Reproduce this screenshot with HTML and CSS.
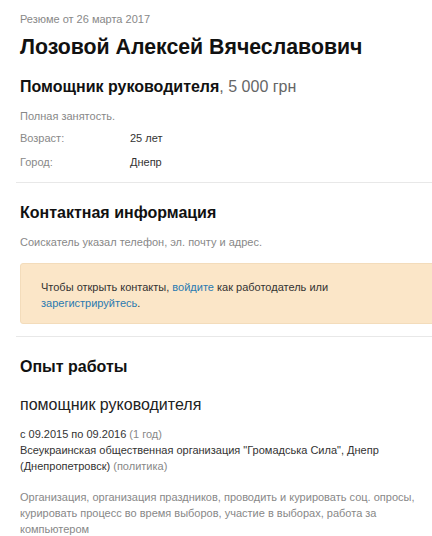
FILE: index.html
```html
<!DOCTYPE html>
<html lang="ru">
<head>
<meta charset="utf-8">
<link rel="stylesheet" href="styles.css">
</head>
<body>
<div class="page">
  <div class="date">Резюме от 26 марта 2017</div>
  <h1 class="name">Лозовой Алексей Вячеславович</h1>
  <div class="position"><b>Помощник руководителя</b><span class="salary">, 5 000 грн</span></div>
  <div class="muted employment">Полная занятость.</div>
  <div class="info">
    <span class="muted">Возраст:</span><span>25 лет</span>
    <span class="muted">Город:</span><span>Днепр</span>
  </div>
  <hr class="sep first">
  <h2 class="section">Контактная информация</h2>
  <div class="muted contact-note">Соискатель указал телефон, эл. почту и адрес.</div>
  <div class="notice">Чтобы открыть контакты, <a href="#">войдите</a> как работодатель или<br><a href="#">зарегистрируйтесь</a>.</div>
  <hr class="sep second">
  <h2 class="section">Опыт работы</h2>
  <div class="job-title">помощник руководителя</div>
  <div class="job-meta">с 09.2015 по 09.2016 <span class="muted">(1 год)</span><br>Всеукраинская общественная организация "Громадська Сила", Днепр<br>(Днепропетровск) <span class="muted">(политика)</span></div>
  <div class="muted job-desc">Организация, организация праздников, проводить и курировать соц. опросы,<br>курировать процесс во время выборов, участие в выборах, работа за<br>компьютером</div>
</div>
</body>
</html>
```

FILE: styles.css
```css
html, body {
  margin: 0;
  padding: 0;
  background: #fff;
  overflow: hidden;
}
body {
  font-family: "Liberation Sans", Arial, sans-serif;
  color: #333;
  font-size: 11px;
  line-height: 16px;
}
.page {
  width: 440px;
  padding-left: 20px;
  padding-top: 11px;
}
.date {
  color: #888;
}
.name {
  margin: 6px 0 0;
  font-size: 21.3px;
  line-height: 28px;
  font-weight: bold;
  color: #111;
}
.position {
  margin-top: 16px;
  font-size: 16px;
  line-height: 20px;
  color: #111;
}
.salary {
  color: #666;
}
.muted {
  color: #888;
}
.employment {
  margin-top: 11px;
}
.info {
  margin-top: 6px;
  display: grid;
  grid-template-columns: 110px 1fr;
  row-gap: 8px;
}
.sep {
  border: 0;
  border-top: 1px solid #e8e8e8;
  margin: 0 0 0 -4px;
}
.sep.first {
  margin-top: 12px;
}
.section {
  margin: 20px 0 0;
  font-size: 16px;
  line-height: 20px;
  font-weight: bold;
  color: #111;
}
.contact-note {
  margin-top: 11px;
}
.notice {
  margin-top: 13px;
  background: #fbe6c8;
  border: 1px solid #f3dcbb;
  border-radius: 3px;
  padding: 15px 20px 12px 20px;
}
.notice a {
  color: #2a7ab0;
  text-decoration: none;
}
.sep.second {
  margin-top: 12px;
}
.section.exp {
  margin-top: 20px;
}
.job-title {
  margin-top: 18px;
  font-size: 16px;
  line-height: 20px;
  color: #222;
}
.job-meta {
  margin-top: 11px;
}
.job-desc {
  margin-top: 15px;
}
```
